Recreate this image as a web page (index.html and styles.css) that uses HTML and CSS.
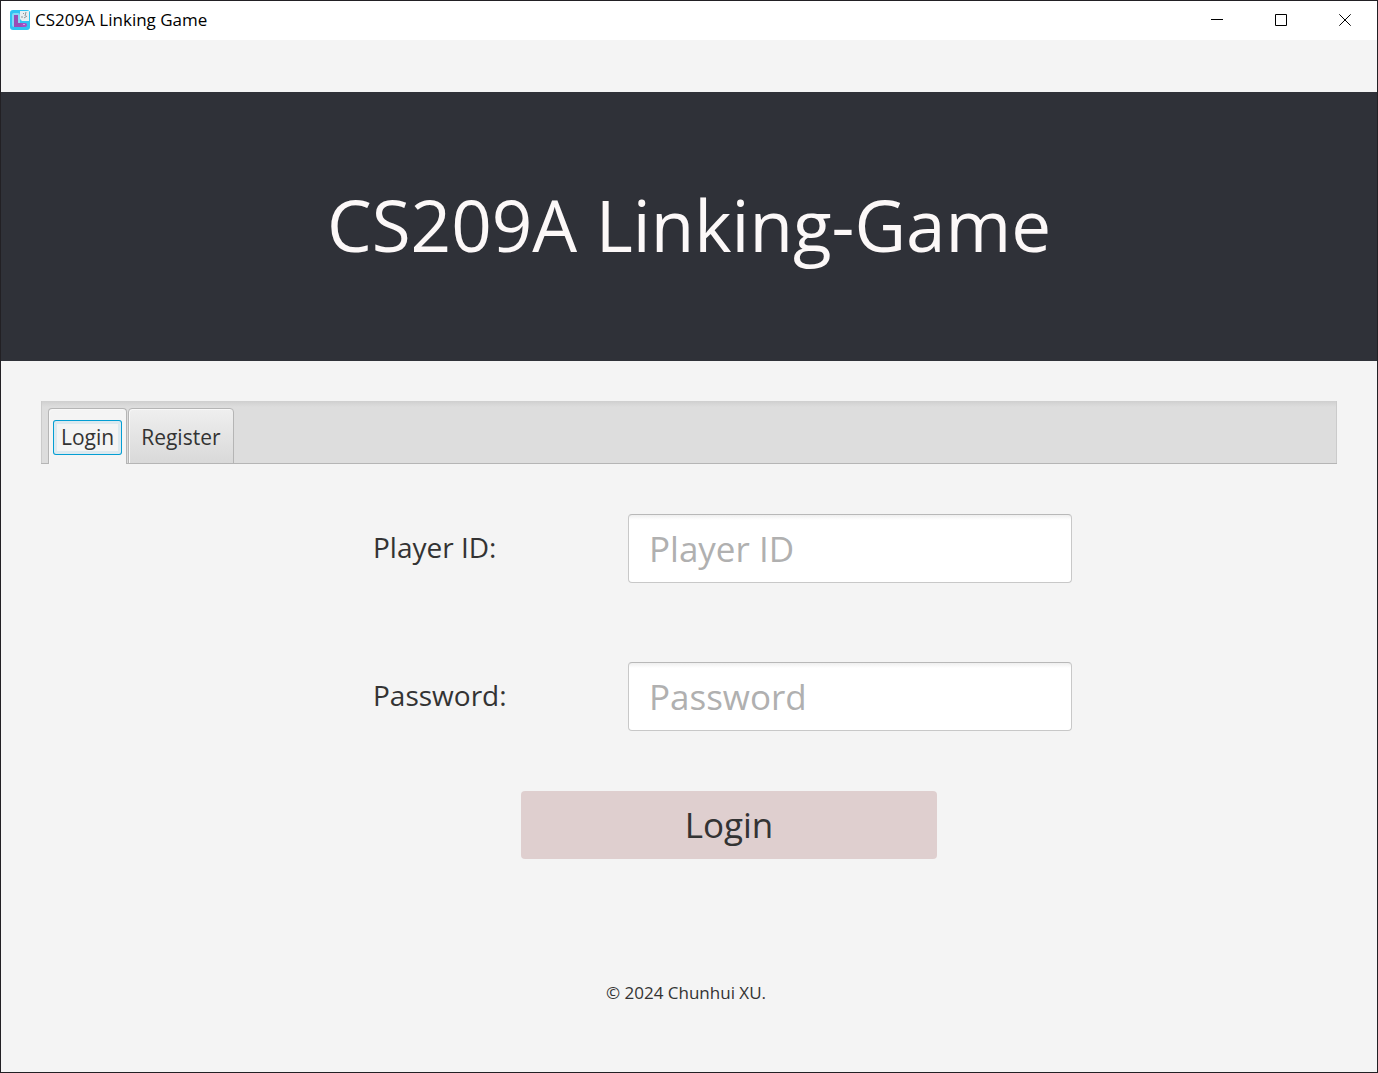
FILE: index.html
```html
<!DOCTYPE html>
<html lang="en">
<head>
<meta charset="utf-8">
<title>CS209A Linking Game</title>
<link rel="stylesheet" href="styles.css">
</head>
<body>
<div class="window">
  <header class="titlebar">
    <svg class="app-icon" viewBox="0 0 20 20" aria-hidden="true">
      <rect width="20" height="20" rx="3" fill="#2fc3f3"/>
      <rect x="2" y="3" width="8" height="14" rx="2" fill="#83d9f7"/>
      <path d="M10 1h9v10h-7l-2-2z" fill="#e9eef2"/>
      <path d="M13 3l1 1M16 2l-1 4M14 8l3-2M12 6v2" stroke="#8d9398" fill="none"/>
      <path d="M4 5h4v8h5v4H4z" fill="#9a4db5"/>
      <rect x="11" y="13" width="6" height="4" rx="2" fill="#a24fc4"/>
      <rect x="13" y="14" width="2" height="1" fill="#d59be8"/>
    </svg>
    <span class="app-name">CS209A Linking Game</span>
    <div class="window-controls">
      <button class="window-button" type="button" aria-label="Minimize"><svg viewBox="0 0 12 12"><path d="M0 5.5h12"/></svg></button>
      <button class="window-button" type="button" aria-label="Maximize"><svg viewBox="0 0 12 12"><path d="M.5.5h11v11H.5z"/></svg></button>
      <button class="window-button" type="button" aria-label="Close"><svg viewBox="0 0 12 12"><path d="M.3.3l11.4 11.4M11.7.3L.3 11.7"/></svg></button>
    </div>
  </header>
  <div class="banner"><h1 class="banner-title">CS209A Linking-Game</h1></div>
  <main class="content">
    <div class="tabs" role="tablist">
      <button class="tab tab-selected" type="button" role="tab" aria-selected="true"><span class="tab-label">Login</span></button>
      <button class="tab" type="button" role="tab" aria-selected="false"><span class="tab-label">Register</span></button>
    </div>
    <form class="login-form">
      <div class="fields">
        <label class="field-label" for="player">Player ID:</label>
        <input class="field-input" id="player" type="text" placeholder="Player ID">
        <label class="field-label" for="password">Password:</label>
        <input class="field-input" id="password" type="password" placeholder="Password">
      </div>
      <button class="submit" type="submit">Login</button>
    </form>
  </main>
  <footer class="copyright">© 2024 Chunhui XU.</footer>
</div>
</body>
</html>
```
FILE: styles.css
```css
* { box-sizing: border-box; }

body {
  margin: 0;
  font-family: "Segoe UI", "Open Sans", "Noto Sans", sans-serif;
  color: #333;
  background: #f4f4f4;
}

button, input { font-family: inherit; color: inherit; }

.window {
  min-height: 100vh;
  display: flex;
  flex-direction: column;
  border: 1px solid #222024;
}

.titlebar {
  display: flex;
  align-items: center;
  height: 39px;
  padding: 0 0 1px 9px;
  background: #fff;
  color: #000;
}

.app-icon { width: 20px; height: 20px; margin-right: 5px; }
.app-name { font-size: 17px; line-height: 24px; }
.window-controls { display: flex; height: 100%; margin-left: auto; }

.window-button {
  display: grid;
  place-items: center;
  width: 64px;
  padding: 0;
  border: 0;
  background: none;
}

.window-button svg {
  width: 12px;
  height: 12px;
  fill: none;
  stroke: #000;
}

.banner {
  display: grid;
  place-items: center;
  margin-top: 52px;
  padding: 83px 20px 86px;
  background: #2f3138;
}

.banner-title {
  margin: 0;
  font-size: 71px;
  font-weight: 400;
  line-height: 100px;
  color: #fcf8f8;
}

.content { padding: 40px 40px 0; }

.tabs {
  display: flex;
  align-items: flex-end;
  gap: 1px;
  height: 63px;
  padding-left: 7px;
  background: linear-gradient(#cfcfcf, #ddd 6px);
  box-shadow: inset 0 -1px #b5b5b5, inset 1px 0 #cbcbcb, inset -1px 0 #cbcbcb;
}

.tab {
  height: 56px;
  padding: 2px 4px 0;
  border: 1px solid #b5b5b5;
  border-radius: 4px 4px 0 0;
  background: linear-gradient(#efefef, #d9d9d9);
  box-shadow: inset 1px 1px #f8f8f8;
}

.tab-selected {
  border-bottom: 0;
  background: #f4f4f4;
}

.tab-label {
  display: block;
  padding: 0 8px;
  border-radius: 3px;
  font-size: 21px;
  line-height: 35px;
}

.tab-selected .tab-label {
  box-shadow: inset 0 0 0 1px #039ed3, inset 0 0 0 4px #dce9ef;
}

.login-form {
  display: flex;
  flex-direction: column;
  align-items: center;
  padding-top: 50px;
}

.fields {
  display: grid;
  grid-template-columns: 255px 444px;
  row-gap: 79px;
  align-items: center;
  padding-left: 67px;
}

.field-label { padding-bottom: 4px; font-size: 28px; line-height: 40px; }

.field-input {
  width: 100%;
  height: 69px;
  padding: 0 20px;
  border: 1px solid #c8c8c8;
  border-top-color: #b8b8b8;
  border-radius: 4px;
  background: linear-gradient(#efefef, #fff 5px);
  font-size: 35px;
}

.field-input::placeholder { color: #b0b0b0; opacity: 1; }

.submit {
  width: 416px;
  height: 68px;
  margin: 60px 0 0 80px;
  padding: 0 0 2px;
  border: 0;
  border-radius: 4px;
  background: #dfcfcf;
  font-size: 35px;
}

.copyright {
  margin: 122px 0 40px;
  padding-right: 6px;
  font-size: 17px;
  line-height: 24px;
  text-align: center;
}
```
